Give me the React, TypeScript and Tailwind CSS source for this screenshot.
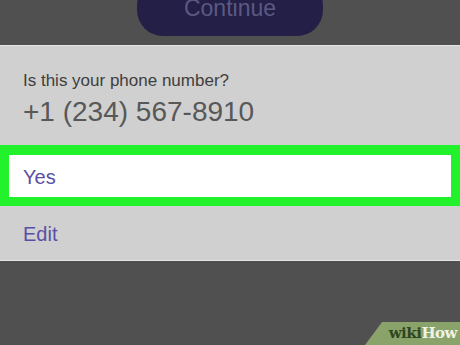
export default function App() {
  return (
    <div className="relative h-[345px] w-[460px] overflow-hidden bg-[#505050] font-['Liberation_Sans',Arial,sans-serif]">
      {/* top strip with the cut-off Continue button */}
      <div className="flex h-[45px] justify-center">
        <div className="-mt-[20px] flex h-[56px] w-[186px] items-center justify-center rounded-[26px] bg-[#231f46]">
          <span className="text-[23px] leading-none text-[#5b5984]">Continue</span>
        </div>
      </div>

      {/* action sheet */}
      <div className="border-y border-[#e4e4e4] bg-[#d0d0d0]">
        <div className="px-[23px] pt-[26px]">
          <p className="text-[17px] leading-none text-[#3e3e3e]">Is this your phone number?</p>
          <p className="mt-[9px] text-[28px] leading-none text-[#585858]">+1 (234) 567-8910</p>
        </div>

        <div className="mt-[19px] h-[61px] border-[9px] border-t-[10px] border-[#22f22c] bg-white">
          <div className="flex h-full items-center pl-[14px] pt-[2px]">
            <span className="text-[20px] leading-none text-[#5a4fa6]">Yes</span>
          </div>
        </div>

        <div className="flex h-[54px] items-center pl-[23px] pt-[2px]">
          <span className="text-[20px] leading-none text-[#5a4fa6]">Edit</span>
        </div>
      </div>

      {/* wikiHow badge */}
      <div className="absolute bottom-0 right-0 flex h-[23px] w-[95px] items-center justify-end bg-[#8aa36b] pr-[3px] [clip-path:polygon(18%_0,100%_0,100%_100%,0_100%)]">
        <span className="font-['DejaVu_Serif','Liberation_Serif',serif] text-[15px] font-bold leading-none tracking-[-0.5px]">
          <span className="text-[#2f4720]">wiki</span>
          <span className="text-[#eef3e6]">How</span>
        </span>
      </div>
    </div>
  );
}
